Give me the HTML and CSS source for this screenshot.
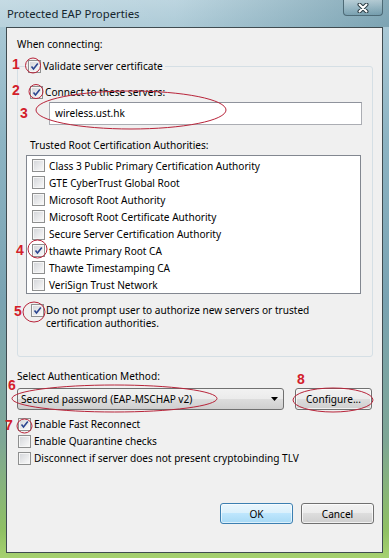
FILE: index.html
```html
<!DOCTYPE html>
<html lang="en">
<head>
    <meta charset="UTF-8">
    <title>Protected EAP Properties</title>
    <link rel="stylesheet" href="styles.css">
</head>
<body>
    <div class="window">
        <div class="titlebar">
            <span class="title">Protected EAP Properties</span>
            <div class="close">
                <svg width="14" height="10" viewBox="0 0 14 10">
                    <path d="M3.5 1.5 L10.5 8.5 M10.5 1.5 L3.5 8.5" stroke="#2c3d45" stroke-width="4" stroke-linecap="round"/>
                    <path d="M3.5 1.5 L10.5 8.5 M10.5 1.5 L3.5 8.5" stroke="#fff" stroke-width="2" stroke-linecap="round"/>
                </svg>
            </div>
        </div>

        <div class="client">
            <div class="caption">When connecting:</div>

            <div class="group">
                <div class="group-head">
                    <span class="box on"><svg width="11" height="11" viewBox="0 0 11 11"><path d="M2.5 5.5 L4.5 8 L8.8 2.5" fill="none" stroke="#2b4590" stroke-width="1.6"/></svg></span>
                    <span>Validate server certificate</span>
                </div>

                <div class="check servers">
                    <span class="box on"><svg width="11" height="11" viewBox="0 0 11 11"><path d="M2.5 5.5 L4.5 8 L8.8 2.5" fill="none" stroke="#2b4590" stroke-width="1.6"/></svg></span>
                    <span>Connect to these servers:</span>
                </div>
                <div class="textbox">wireless.ust.hk</div>

                <div class="label">Trusted Root Certification Authorities:</div>
                <div class="list">
                    <div class="item"><span class="box"></span>Class 3 Public Primary Certification Authority</div>
                    <div class="item"><span class="box"></span>GTE CyberTrust Global Root</div>
                    <div class="item"><span class="box"></span>Microsoft Root Authority</div>
                    <div class="item"><span class="box"></span>Microsoft Root Certificate Authority</div>
                    <div class="item"><span class="box"></span>Secure Server Certification Authority</div>
                    <div class="item"><span class="box on"><svg width="11" height="11" viewBox="0 0 11 11"><path d="M2.5 5.5 L4.5 8 L8.8 2.5" fill="none" stroke="#2b4590" stroke-width="1.6"/></svg></span>thawte Primary Root CA</div>
                    <div class="item"><span class="box"></span>Thawte Timestamping CA</div>
                    <div class="item"><span class="box"></span>VeriSign Trust Network</div>
                </div>

                <div class="check prompt">
                    <span class="box on"><svg width="11" height="11" viewBox="0 0 11 11"><path d="M2.5 5.5 L4.5 8 L8.8 2.5" fill="none" stroke="#2b4590" stroke-width="1.6"/></svg></span>
                    <span class="prompt-text">Do not prompt user to authorize new servers or trusted certification authorities.</span>
                </div>
            </div>

            <div class="caption method">Select Authentication Method:</div>
            <div class="method-row">
                <div class="combo">
                    <span>Secured password (EAP-MSCHAP v2)</span>
                    <svg width="7" height="4" viewBox="0 0 7 4"><path d="M0 0 H7 L3.5 4 Z" fill="#000"/></svg>
                </div>
                <div class="btn configure">Configure...</div>
            </div>

            <div class="options">
                <div class="check">
                    <span class="box on"><svg width="11" height="11" viewBox="0 0 11 11"><path d="M2.5 5.5 L4.5 8 L8.8 2.5" fill="none" stroke="#2b4590" stroke-width="1.6"/></svg></span>
                    <span>Enable Fast Reconnect</span>
                </div>
                <div class="check">
                    <span class="box"></span>
                    <span>Enable Quarantine checks</span>
                </div>
                <div class="check">
                    <span class="box"></span>
                    <span>Disconnect if server does not present cryptobinding TLV</span>
                </div>
            </div>

            <div class="buttons">
                <div class="btn default">OK</div>
                <div class="btn">Cancel</div>
            </div>
        </div>

        <!-- annotation marks drawn over the dialog -->
        <svg class="marks" width="389" height="558" viewBox="0 0 389 558">
            <ellipse cx="33" cy="65.5" rx="7.5" ry="7.5"/>
            <ellipse cx="36" cy="91.5" rx="7" ry="7"/>
            <ellipse cx="131" cy="110" rx="95" ry="19"/>
            <ellipse cx="37.5" cy="249" rx="9.5" ry="9"/>
            <ellipse cx="34" cy="312" rx="11" ry="10"/>
            <ellipse cx="114.5" cy="398.5" rx="102.5" ry="13.5"/>
            <ellipse cx="333" cy="400" rx="40" ry="12"/>
            <ellipse cx="24.5" cy="426" rx="7.5" ry="7"/>
        </svg>
        <span class="num n1">1</span>
        <span class="num n2">2</span>
        <span class="num n3">3</span>
        <span class="num n4">4</span>
        <span class="num n5">5</span>
        <span class="num n6">6</span>
        <span class="num n7">7</span>
        <span class="num n8">8</span>
    </div>
</body>
</html>
```

FILE: styles.css
```css
body {
    margin: 0;
    font-family: "Noto Sans", "Liberation Sans", sans-serif;
    font-size: 10.1px;
    color: #000;
}
.window {
    position: relative;
    width: 389px;
    height: 558px;
    display: flex;
    flex-direction: column;
    overflow: hidden;
    background: linear-gradient(to bottom, #b9d3de 0, #a9c8d5 27px, #8db4c3 140px, #7aa3b2 300px, #7ea696 440px, #8fc064 530px, #a6d170 558px);
}
.titlebar {
    height: 27px;
    flex: none;
    display: flex;
    justify-content: space-between;
    align-items: flex-start;
    background: linear-gradient(90deg, rgba(255,255,255,0.18) 0, rgba(255,255,255,0.05) 45%, rgba(40,95,115,0.35) 100%);
}
.title {
    margin: 5px 0 0 7px;
    font-size: 11.3px;
    line-height: 17px;
    color: #15262d;
}
.close {
    width: 38px;
    height: 15px;
    margin-right: 6px;
    display: flex;
    align-items: center;
    justify-content: center;
    border: 1px solid #4d6a76;
    border-top: none;
    border-radius: 0 0 4px 4px;
    background: linear-gradient(to bottom, rgba(255,255,255,0.35), rgba(255,255,255,0.1) 50%, rgba(60,110,130,0.2));
}
.client {
    flex: 1;
    margin: 0 6px 5px 6px;
    border: 1px solid #3f4b50;
    background: #f0f0f0;
    display: flex;
    flex-direction: column;
}
.caption {
    margin: 8px 0 0 10px;
    line-height: 16px;
}
.group {
    margin: 14px 9px 0 10px;
    border: 1px solid #d5dfe5;
    border-radius: 3px;
    padding-bottom: 26px;
}
.group-head {
    margin: -9px 0 0 8px;
    padding: 0 2px;
    width: fit-content;
    background: #f0f0f0;
    display: flex;
    align-items: center;
    gap: 2px;
    line-height: 16px;
}
.check {
    display: flex;
    align-items: center;
    gap: 2px;
    line-height: 17px;
}
.box {
    width: 13px;
    height: 13px;
    box-sizing: border-box;
    flex: none;
    border: 1px solid #8e8f8f;
    box-shadow: inset 0 0 0 1px #f6f6f6;
    background: linear-gradient(135deg, #d2d4d8, #fbfbfb);
    display: flex;
    align-items: center;
    justify-content: center;
}
.servers {
    margin: 10px 0 0 12px;
}
.textbox {
    margin: 1px 10px 0 31px;
    height: 23px;
    box-sizing: border-box;
    border: 1px solid #abadb3;
    border-top-color: #8f939c;
    background: #fff;
    padding-left: 5px;
    line-height: 21px;
}
.label {
    margin: 12px 0 0 12px;
    line-height: 16px;
}
.list {
    margin: 2px 0 0 8px;
    width: 335px;
    box-sizing: border-box;
    border: 1px solid #828790;
    background: #fff;
    padding: 1px 0 0;
}
.item {
    height: 17px;
    display: flex;
    align-items: center;
    gap: 4px;
    padding-left: 5px;
}
.prompt {
    margin: 10px 0 0 13px;
    align-items: flex-start;
    line-height: 13px;
}
.prompt-text {
    max-width: 272px;
}
.method {
    margin-top: 11px;
}
.method-row {
    margin: 4px 0 0 10px;
    display: flex;
    gap: 11px;
}
.combo {
    width: 267px;
    height: 22px;
    box-sizing: border-box;
    border: 1px solid #707070;
    border-radius: 3px;
    background: linear-gradient(to bottom, #f2f2f2 0, #ebebeb 50%, #dddddd 50%, #cfcfcf 100%);
    display: flex;
    align-items: center;
    justify-content: space-between;
    padding: 0 5px 0 3px;
}
.btn {
    width: 73px;
    height: 21px;
    box-sizing: border-box;
    border: 1px solid #707070;
    border-radius: 3px;
    background: linear-gradient(to bottom, #f2f2f2 0, #ebebeb 50%, #dddddd 50%, #cfcfcf 100%);
    box-shadow: inset 0 0 0 1px rgba(255,255,255,0.7);
    display: flex;
    align-items: center;
    justify-content: center;
}
.configure {
    width: 77px;
    height: 22px;
}
.btn.default {
    border-color: #3c7fb1;
    background: linear-gradient(to bottom, #eaf6fd 0, #d9f0fc 50%, #bee6fd 50%, #a7d9f5 100%);
    box-shadow: inset 0 0 0 1px rgba(255,255,255,0.6);
}
.options {
    margin: 6px 0 0 11px;
}
.options .check {
    gap: 3px;
}
.buttons {
    margin: 36px 8px 0 0;
    display: flex;
    justify-content: flex-end;
    gap: 8px;
}
.marks {
    position: absolute;
    left: 0;
    top: 0;
    pointer-events: none;
}
.marks ellipse {
    fill: none;
    stroke: #b8243a;
    stroke-width: 1;
}
.num {
    position: absolute;
    font-family: "Liberation Sans", sans-serif;
    font-weight: bold;
    font-size: 14px;
    line-height: 14px;
    color: #d3202a;
}
.n1 { left: 12px; top: 57px; }
.n2 { left: 12px; top: 83px; }
.n3 { left: 20px; top: 106px; }
.n4 { left: 16px; top: 243px; }
.n5 { left: 14px; top: 304px; }
.n6 { left: 8px; top: 378px; }
.n7 { left: 5px; top: 418px; }
.n8 { left: 297px; top: 372px; }
```
